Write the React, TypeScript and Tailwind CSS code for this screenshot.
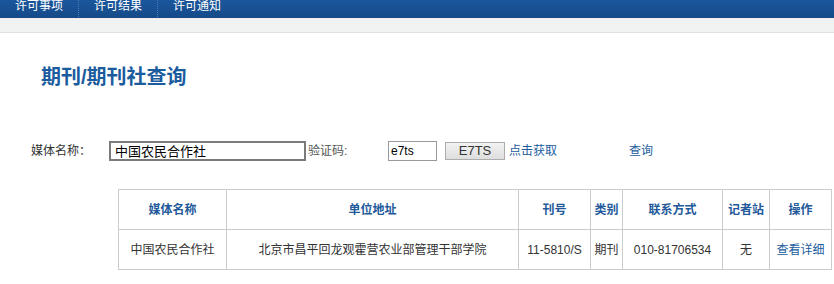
import React from 'react'

const navItems = ['许可事项', '许可结果', '许可通知']

const columns = [
  { title: '媒体名称', width: 'w-[108px]' },
  { title: '单位地址', width: 'w-[292px]' },
  { title: '刊号', width: 'w-[72px]' },
  { title: '类别', width: 'w-[32px]' },
  { title: '联系方式', width: 'w-[100px]' },
  { title: '记者站', width: 'w-[47px]' },
  { title: '操作', width: 'w-[62px]' },
]

export default function App() {
  return (
    <div className="w-[834px] h-[284px] bg-white overflow-hidden font-['Liberation_Sans','Noto_Sans_CJK_SC',sans-serif] text-[12px] text-[#333]">
      {/* Top nav */}
      <div className="h-[18px] overflow-hidden bg-gradient-to-b from-[#1b579d] to-[#164a88]">
        <div className="flex items-start -mt-[1px] text-[12px] leading-[14px] text-white">
          {navItems.map((item, i) => (
            <div key={item} className="flex items-start">
              {i > 0 && <span className="h-[18px] border-l border-dotted border-[#4c7bb3]" />}
              <span className="px-[15px]">{item}</span>
            </div>
          ))}
        </div>
      </div>
      <div className="h-[15px] bg-[#f1f3f3] border-t border-[#f7ecea] border-b border-b-[#dde2e2]" />

      {/* Title */}
      <h1 className="mt-[32px] pl-[41px] text-[20px] leading-[24px] font-bold text-[#1b5c9e]">期刊/期刊社查询</h1>

      {/* Search form */}
      <div className="mt-[52px] flex items-center h-[20px]">
        <span className="pl-[31px] w-[109px]">媒体名称：</span>
        <div className="w-[197px] h-[20px] border-2 border-[#7b7b7b] flex items-end pl-[4px] overflow-hidden">
          <span className="text-[13px] leading-[15px] text-black">中国农民合作社</span>
        </div>
        <span className="ml-[2px] w-[80px] text-[#555]">验证码:</span>
        <div className="w-[49px] h-[20px] border border-[#9a9a9a] pl-[2px] leading-[18px] text-black">e7ts</div>
        <button className="ml-[8px] w-[60px] h-[18px] border border-[#adadad] bg-gradient-to-b from-[#f2f2f2] to-[#dedede] text-[13px] leading-[16px] text-[#333]">
          E7TS
        </button>
        <span className="ml-[4px] text-[#1b5c9e]">点击获取</span>
        <span className="ml-[72px] text-[#1b5c9e]">查询</span>
      </div>

      {/* Result table */}
      <table className="mt-[28px] ml-[118px] border-collapse border border-[#cccccc]">
        <thead>
          <tr className="h-[40px]">
            {columns.map((c) => (
              <th key={c.title} className={`${c.width} border border-[#cccccc] p-0 font-bold text-[#22599a] text-center`}>
                {c.title}
              </th>
            ))}
          </tr>
        </thead>
        <tbody>
          <tr className="h-[40px] text-center">
            <td className="border border-[#cccccc] p-0">中国农民合作社</td>
            <td className="border border-[#cccccc] p-0">北京市昌平回龙观霍营农业部管理干部学院</td>
            <td className="border border-[#cccccc] p-0">11-5810/S</td>
            <td className="border border-[#cccccc] p-0">期刊</td>
            <td className="border border-[#cccccc] p-0">010-81706534</td>
            <td className="border border-[#cccccc] p-0">无</td>
            <td className="border border-[#cccccc] p-0 text-[#1b5c9e]">查看详细</td>
          </tr>
        </tbody>
      </table>
    </div>
  )
}
